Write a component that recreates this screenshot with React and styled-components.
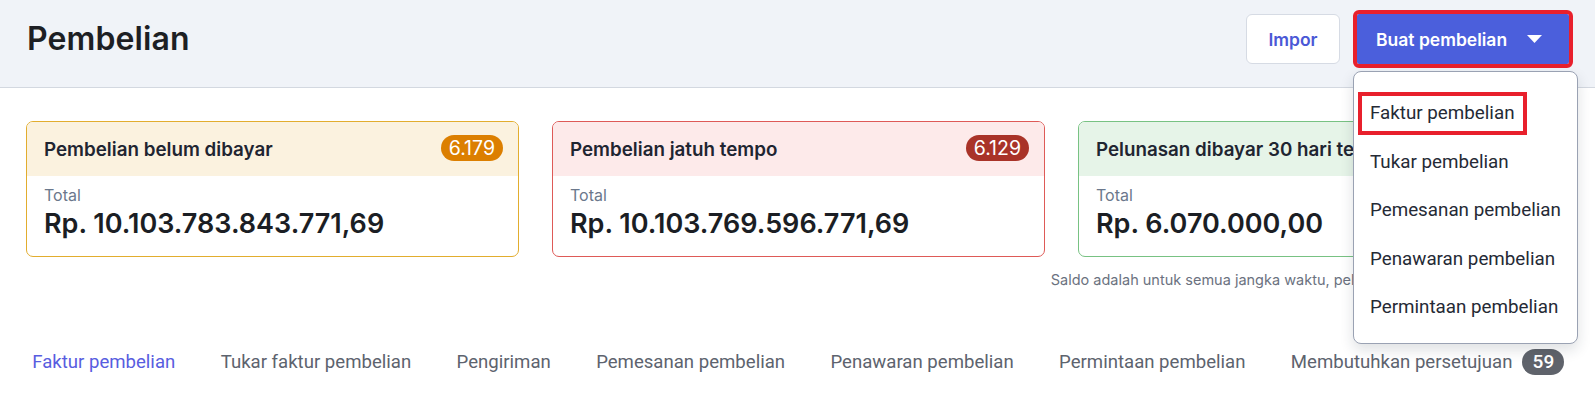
import React from 'react';
import styled, { createGlobalStyle } from 'styled-components';

const GlobalStyle = createGlobalStyle`
  html, body {
    margin: 0;
    padding: 0;
    background: #ffffff;
    font-family: Inter, "Noto Sans", sans-serif;
    color: #1f2430;
  }
`;

const Page = styled.div`
  width: 1595px;
  min-height: 393px;
  background: #ffffff;
  overflow: hidden;
`;

const Header = styled.header`
  height: 88px;
  box-sizing: border-box;
  padding: 14px 26px 0 27px;
  display: flex;
  justify-content: space-between;
  align-items: flex-start;
  background: #f0f3f8;
  border-bottom: 1px solid #d3d8e0;
`;

const Title = styled.h1`
  margin: 0;
  font-size: 32px;
  line-height: 50px;
  font-weight: 600;
  color: #1d1f24;
  letter-spacing: 0.1px;
`;

const Actions = styled.div`
  display: flex;
  gap: 17px;
  position: relative;
`;

const ImportButton = styled.button`
  height: 50px;
  width: 94px;
  padding: 0;
  border: 1px solid #d6dbe4;
  border-radius: 6px;
  background: #ffffff;
  color: #4a58d6;
  font-family: Inter, sans-serif;
  font-size: 17.5px;
  font-weight: 600;
`;

const CreateButton = styled.button`
  height: 50px;
  width: 212px;
  padding: 0 0 0 19px;
  border: none;
  border-radius: 2px;
  background: #4b5fdc;
  color: #ffffff;
  font-family: Inter, sans-serif;
  font-size: 17.5px;
  font-weight: 600;
  display: flex;
  align-items: center;
  gap: 20px;
  outline: 4px solid #e8202c;
`;

const Menu = styled.div`
  position: absolute;
  top: 57px;
  right: -9px;
  width: 225px;
  box-sizing: border-box;
  padding: 17px 0 11px;
  background: #ffffff;
  border: 1px solid #9aa2b3;
  border-radius: 8px;
  box-shadow: 0 6px 14px rgba(30, 40, 60, 0.14);
  z-index: 10;
`;

const MenuItem = styled.div`
  height: 48.5px;
  display: flex;
  align-items: center;
  padding-left: 16px;
  font-family: Roboto, "Noto Sans", sans-serif;
  font-size: 18.8px;
  color: #252a35;
  white-space: nowrap;
`;

const Marked = styled.span`
  display: inline-block;
  margin-left: -12px;
  padding: 7px 8px;
  border: 4px solid #e8202c;
  line-height: 21px;
`;

const Cards = styled.section`
  display: grid;
  grid-template-columns: repeat(3, 493px);
  gap: 33px;
  padding: 33px 0 0 26px;
`;

const Card = styled.div`
  border: 1px solid ${({ $tone }) => $tone.border};
  border-radius: 7px;
  overflow: hidden;
  background: #ffffff;
`;

const CardHead = styled.div`
  height: 54px;
  padding: 0 15px 0 17px;
  display: flex;
  align-items: center;
  justify-content: space-between;
  gap: 12px;
  background: ${({ $tone }) => $tone.head};
  font-size: 18.8px;
  font-weight: 600;
  color: #1f2531;
  white-space: nowrap;
`;

const Badge = styled.span`
  height: 26px;
  padding: 0 8px;
  border-radius: 13px;
  background: ${({ $bg }) => $bg};
  color: #ffffff;
  font-size: 19.5px;
  font-weight: 400;
  line-height: 26px;
  margin-top: -2px;
`;

const CardBody = styled.div`
  padding: 9px 16px 16px 17px;
`;

const Label = styled.div`
  font-size: 16px;
  line-height: 20px;
  color: #6b788c;
`;

const Amount = styled.div`
  margin-top: 3px;
  font-size: 27px;
  line-height: 32px;
  font-weight: 600;
  color: #1b1e24;
`;

const Note = styled.p`
  margin: 13px 0 0;
  width: 1571px;
  text-align: right;
  font-size: 14.5px;
  line-height: 20px;
  color: #6b7280;
  white-space: nowrap;
`;

const Tabs = styled.nav`
  display: flex;
  align-items: center;
  padding: 52px 0 0 9.5px;
  white-space: nowrap;
`;

const Tab = styled.div`
  flex: 0 0 auto;
  padding: 0 22.7px;
  display: flex;
  align-items: center;
  gap: 10px;
  height: 40px;
  font-family: Roboto, "Noto Sans", sans-serif;
  font-size: 18.6px;
  color: ${({ $active }) => ($active ? '#585de0' : '#5d636e')};
`;

const Count = styled.span`
  min-width: 42px;
  height: 26px;
  box-sizing: border-box;
  padding: 0 8px;
  border-radius: 13px;
  background: #5f636b;
  color: #ffffff;
  font-weight: 500;
  font-size: 19px;
  line-height: 26px;
  text-align: center;
`;

const tones = {
  amber: { border: '#e2ad2e', head: '#fbf2df', badge: '#dc7f00' },
  red: { border: '#de5a57', head: '#fdeaea', badge: '#a93328' },
  green: { border: '#78c283', head: '#e6f4e8', badge: '#2f8a3e' },
};

const cards = [
  { title: 'Pembelian belum dibayar', count: '6.179', total: 'Rp. 10.103.783.843.771,69', tone: tones.amber },
  { title: 'Pembelian jatuh tempo', count: '6.129', total: 'Rp. 10.103.769.596.771,69', tone: tones.red },
  { title: 'Pelunasan dibayar 30 hari terakhir', count: '12', total: 'Rp. 6.070.000,00', tone: tones.green },
];

const menuItems = ['Tukar pembelian', 'Pemesanan pembelian', 'Penawaran pembelian', 'Permintaan pembelian'];

const tabs = [
  'Faktur pembelian',
  'Tukar faktur pembelian',
  'Pengiriman',
  'Pemesanan pembelian',
  'Penawaran pembelian',
  'Permintaan pembelian',
];

const App = () => {
  return (
    <Page>
      <GlobalStyle />
      <Header>
        <Title>Pembelian</Title>
        <Actions>
          <ImportButton>Impor</ImportButton>
          <CreateButton>
            Buat pembelian
            <svg width="15" height="8" viewBox="0 0 15 8">
              <polygon points="0,0 15,0 7.5,8" fill="#ffffff" />
            </svg>
          </CreateButton>
          <Menu>
            <MenuItem>
              <Marked>Faktur pembelian</Marked>
            </MenuItem>
            {menuItems.map((item) => (
              <MenuItem key={item}>{item}</MenuItem>
            ))}
          </Menu>
        </Actions>
      </Header>

      <Cards>
        {cards.map((c) => (
          <Card key={c.title} $tone={c.tone}>
            <CardHead $tone={c.tone}>
              {c.title}
              <Badge $bg={c.tone.badge}>{c.count}</Badge>
            </CardHead>
            <CardBody>
              <Label>Total</Label>
              <Amount>{c.total}</Amount>
            </CardBody>
          </Card>
        ))}
      </Cards>
      <Note>Saldo adalah untuk semua jangka waktu, pelunasan dibayar 30 hari terakhir.</Note>

      <Tabs>
        {tabs.map((t, i) => (
          <Tab key={t} $active={i === 0}>{t}</Tab>
        ))}
        <Tab>
          Membutuhkan persetujuan
          <Count>59</Count>
        </Tab>
      </Tabs>
    </Page>
  );
};

export default App;
